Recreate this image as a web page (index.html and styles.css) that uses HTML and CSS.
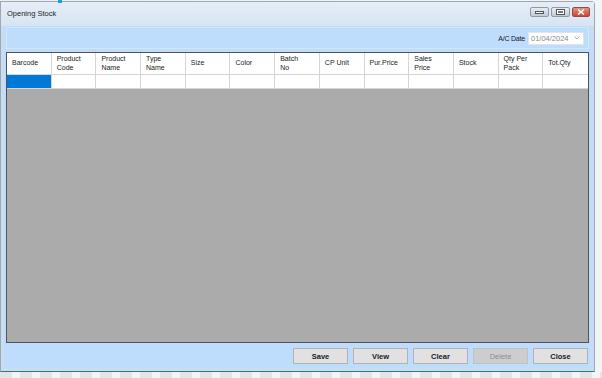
FILE: index.html
```html
<!DOCTYPE html>
<html>
<head>
<meta charset="utf-8">
<link rel="stylesheet" href="styles.css">
</head>
<body>
<div class="desktop">
  <div class="mark"></div>
  <div class="window">
    <div class="titlebar">
      <span class="title">Opening Stock</span>
      <div class="ctrls">
        <div class="cbtn"><svg width="9" height="5" viewBox="0 0 9 5"><rect x="0.5" y="1.5" width="8" height="2" fill="#fff" stroke="#555" stroke-width="1"/></svg></div>
        <div class="cbtn"><svg width="9" height="6" viewBox="0 0 9 6"><rect x="0.5" y="0.5" width="8" height="5" fill="#fff" stroke="#555" stroke-width="1"/><rect x="2" y="2" width="5" height="2" fill="#777"/></svg></div>
        <div class="cbtn close"><svg width="8" height="6" viewBox="0 0 8 6"><path d="M1 0.5 L7 5.5 M7 0.5 L1 5.5" stroke="#fff" stroke-width="1.6"/></svg></div>
      </div>
    </div>
    <div class="client">
      <div class="toppanel">
        <span class="datelabel">A/C Date</span>
        <div class="datebox"><span>01/04/2024</span><svg width="6" height="4" viewBox="0 0 6 4"><path d="M0.5 0.5 L3 3 L5.5 0.5" fill="none" stroke="#a0a0a0" stroke-width="0.9"/></svg></div>
      </div>
      <div class="grid">
        <div class="row head">
          <div class="cell">Barcode</div>
          <div class="cell">Product<br>Code</div>
          <div class="cell">Product<br>Name</div>
          <div class="cell">Type<br>Name</div>
          <div class="cell">Size</div>
          <div class="cell">Color</div>
          <div class="cell">Batch<br>No</div>
          <div class="cell">CP Unit</div>
          <div class="cell">Pur.Price</div>
          <div class="cell">Sales<br>Price</div>
          <div class="cell">Stock</div>
          <div class="cell">Qty Per<br>Pack</div>
          <div class="cell">Tot.Qty</div>
        </div>
        <div class="row data">
          <div class="cell sel"></div>
          <div class="cell"></div>
          <div class="cell"></div>
          <div class="cell"></div>
          <div class="cell"></div>
          <div class="cell"></div>
          <div class="cell"></div>
          <div class="cell"></div>
          <div class="cell"></div>
          <div class="cell"></div>
          <div class="cell"></div>
          <div class="cell"></div>
          <div class="cell"></div>
        </div>
        <div class="empty"></div>
      </div>
      <div class="buttons">
        <button class="btn">Save</button>
        <button class="btn">View</button>
        <button class="btn">Clear</button>
        <button class="btn disabled">Delete</button>
        <button class="btn">Close</button>
      </div>
    </div>
  </div>
  <div class="strip"></div>
</div>
</body>
</html>
```
FILE: styles.css
```css
* { box-sizing: border-box; }
html, body { margin: 0; padding: 0; }
body {
  width: 602px;
  height: 378px;
  overflow: hidden;
  font-family: "Liberation Sans", Arial, sans-serif;
  background: #e9ebee;
}
.desktop {
  position: relative;
  width: 602px;
  height: 378px;
  padding-top: 1px;
  background: linear-gradient(90deg, #eef0f2 0%, #f3f4f5 100%);
}
.mark {
  position: absolute;
  left: 58px;
  top: 0;
  width: 4px;
  height: 3px;
  background: #1aa3d9;
}
.window {
  width: 595px;
  height: 371px;
  display: flex;
  flex-direction: column;
  background: #c9dcf0;
  border: 1px solid #9aa9b8;
  border-bottom: 1px solid #2f7a86;
  border-top-right-radius: 4px;
}
.titlebar {
  height: 24px;
  flex: none;
  display: flex;
  align-items: center;
  justify-content: space-between;
  padding: 0 4px 0 6px;
  background: linear-gradient(#e6eef7, #d7e4f2);
}
.title {
  font-size: 7.5px;
  color: #1e1e1e;
  margin-top: -2px;
}
.ctrls {
  display: flex;
  gap: 2px;
  margin-top: -4px;
}
.cbtn {
  width: 19px;
  height: 10px;
  border: 1px solid #8f9aa6;
  border-radius: 2px;
  background: linear-gradient(#e8eef5, #bfcbd8);
  display: flex;
  align-items: center;
  justify-content: center;
}
.cbtn.close {
  width: 18px;
  border-color: #9c4a3e;
  background: linear-gradient(#e3927f, #c9463a);
}
.client {
  flex: 1;
  display: flex;
  flex-direction: column;
  margin: 0 3px 3px 3px;
  padding: 1px 2px 0 2px;
  background: #bedcfc;
}
.toppanel {
  height: 22px;
  flex: none;
  border: 1px solid #d3e6fb;
  display: flex;
  align-items: center;
  justify-content: flex-end;
  padding-right: 4px;
  gap: 3px;
}
.datelabel {
  font-size: 7px;
  color: #1a1a1a;
  letter-spacing: -0.2px;
}
.datebox {
  width: 56px;
  height: 13px;
  background: #fff;
  border: 1px solid #e4e4e4;
  display: flex;
  align-items: center;
  justify-content: space-between;
  padding: 0 3px 0 2px;
  font-size: 7.5px;
  color: #8a8a8a;
}
.grid {
  margin-top: 3px;
  height: 291px;
  flex: none;
  border: 1px solid #50545a;
  display: flex;
  flex-direction: column;
  background: #ababab;
}
.row {
  display: grid;
  grid-template-columns: repeat(13, 1fr);
  background: #fff;
}
.row.head { height: 22px; border-bottom: 1px solid #d5d5d5; }
.row.data { height: 14px; border-bottom: 1px solid #d5d5d5; }
.cell {
  border-right: 1px solid #d5d5d5;
  font-size: 7px;
  line-height: 8.5px;
  color: #222;
  display: flex;
  align-items: center;
  padding-left: 5px;
}
.cell:last-child { border-right: none; }
.cell.sel { background: #0078d7; }
.empty { flex: 1; }
.buttons {
  display: flex;
  justify-content: flex-end;
  gap: 5px;
  padding: 5px 1px 0 0;
}
.btn {
  width: 55px;
  height: 16px;
  padding: 0;
  border: 1px solid #b3b3b3;
  background: #e1e1e1;
  font-family: "Liberation Sans", Arial, sans-serif;
  font-size: 7.5px;
  font-weight: bold;
  color: #1a1a1a;
}
.btn.disabled {
  background: #cdcdcd;
  border-color: #c2c2c2;
  color: #8e8e8e;
  font-weight: normal;
}
.strip {
  height: 6px;
  background: repeating-linear-gradient(90deg, #e4e4e4 0 12px, #f4f4f4 12px 20px);
}
```
